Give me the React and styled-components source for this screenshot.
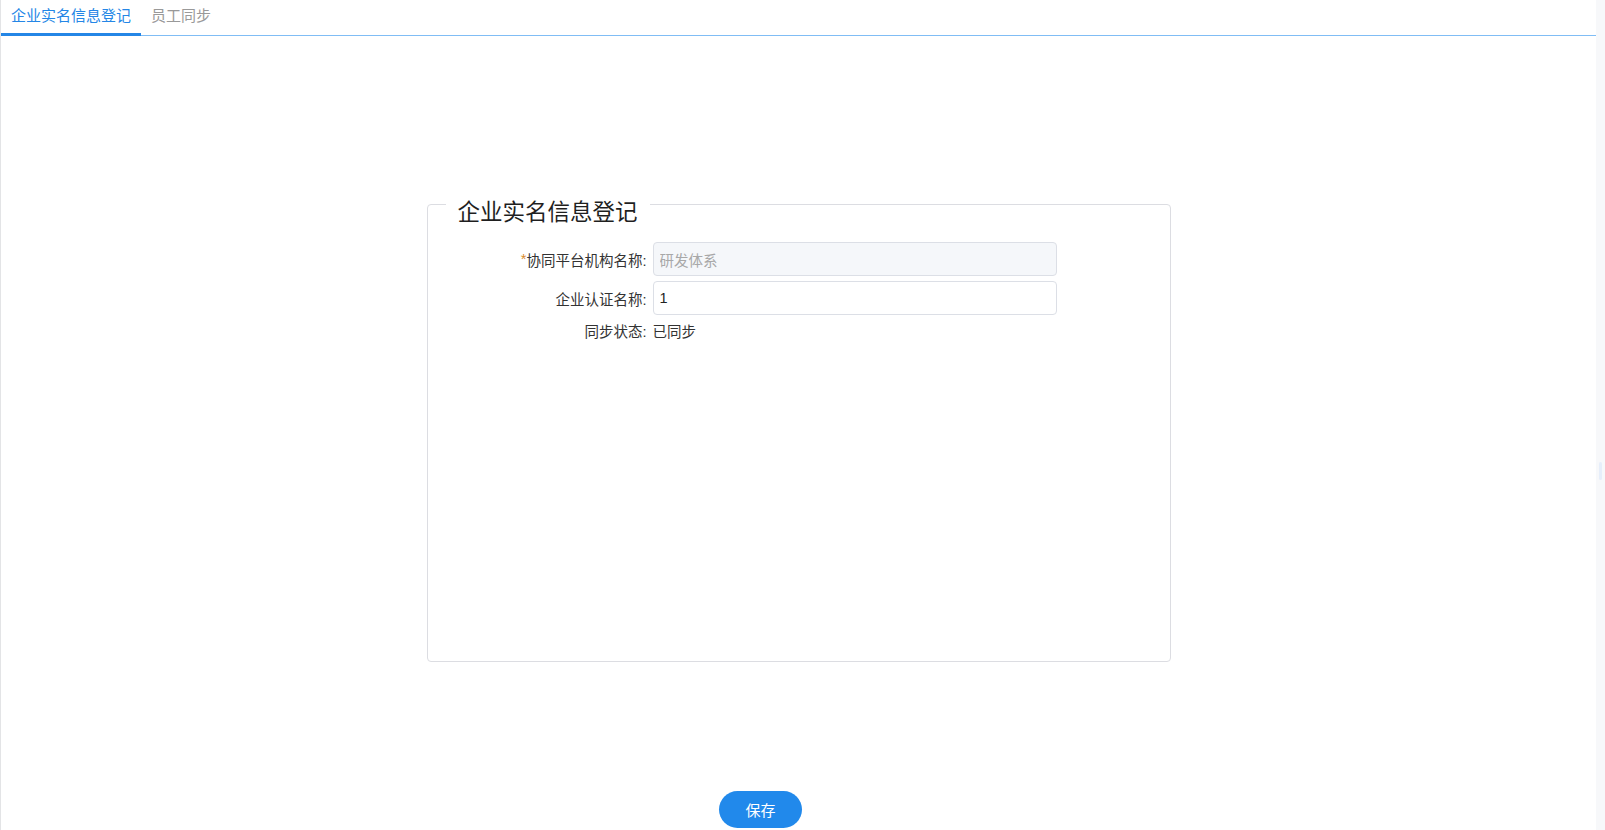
import React from "react";
import styled, { createGlobalStyle } from "styled-components";

const GlobalStyle = createGlobalStyle`
  html, body {
    margin: 0;
    padding: 0;
    background: #ffffff;
  }
  body {
    font-family: "Liberation Sans", "Noto Sans CJK SC", "Noto Sans", sans-serif;
    font-size: 14px;
    color: #333;
  }
  * { box-sizing: border-box; }
`;

const Shell = styled.div`
  display: flex;
  width: 100%;
  height: 830px;
  overflow: hidden;
`;

const Main = styled.div`
  flex: 1;
  display: flex;
  flex-direction: column;
  border-left: 1px solid #e3e4e6;
`;

const Rail = styled.div`
  width: 9px;
  background: #f7f8fa;
  display: flex;
  flex-direction: column;
  align-items: center;
  padding-top: 462px;
`;

const RailThumb = styled.div`
  width: 3px;
  height: 18px;
  border-radius: 2px;
  background: #e6eefa;
`;

const TabBar = styled.div`
  display: flex;
  height: 36px;
  border-bottom: 1px solid #80bdf5;
`;

const Tab = styled.div`
  display: flex;
  align-items: center;
  height: 36px;
  padding: 0 10px 4px;
  font-size: 15px;
  color: ${(p) => (p.$active ? "#2486e6" : "#999")};
  border-bottom: 3px solid ${(p) => (p.$active ? "#2486e6" : "transparent")};
  margin-bottom: -1px;
  cursor: pointer;
`;

const Body = styled.div`
  display: flex;
  flex-direction: column;
  align-items: center;
  padding-top: 144px;
`;

const Panel = styled.fieldset`
  width: 744px;
  margin: 0;
  padding: 14px 0 0;
  border: 1px solid #dcdde2;
  border-radius: 4px;
`;

const Legend = styled.legend`
  margin-left: 18px;
  padding: 18px 12px 0;
  font-size: 22.5px;
  line-height: 30px;
  color: #1f1f1f;
`;

const Form = styled.div`
  display: grid;
  grid-template-columns: 219px 404px;
  grid-auto-rows: min-content;
  column-gap: 6px;
  row-gap: 5px;
  height: 419px;
`;

const Label = styled.label`
  display: flex;
  align-items: center;
  justify-content: flex-end;
  font-size: 14.5px;
  color: #333;
  white-space: nowrap;
`;

const Star = styled.span`
  color: #d98a2b;
`;

const Input = styled.input`
  height: 34px;
  width: 100%;
  padding: 0 6px;
  border: 1px solid #dcdfe6;
  border-radius: 4px;
  font-family: inherit;
  font-size: 14.5px;
  color: ${(p) => (p.disabled ? "#a8a8a8" : "#222")};
  background: ${(p) => (p.disabled ? "#f5f7fa" : "#fff")};
  outline: none;
`;

const Value = styled.div`
  display: flex;
  align-items: center;
  height: 20px;
  font-size: 14.5px;
  color: #333;
`;

const Footer = styled.div`
  display: flex;
  justify-content: center;
  padding-right: 76px;
  margin-top: 129px;
`;

const SaveButton = styled.button`
  width: 83px;
  height: 37px;
  border: none;
  border-radius: 19px;
  background: #2189eb;
  color: #fff;
  font-family: inherit;
  font-size: 15px;
  cursor: pointer;
`;

export default function App() {
  return (
    <>
      <GlobalStyle />
      <Shell>
        <Main>
          <TabBar>
            <Tab $active>企业实名信息登记</Tab>
            <Tab>员工同步</Tab>
          </TabBar>
          <Body>
            <Panel>
              <Legend>企业实名信息登记</Legend>
              <Form>
                <Label>
                  <Star>*</Star>协同平台机构名称:
                </Label>
                <Input disabled defaultValue="研发体系" />
                <Label>企业认证名称:</Label>
                <Input defaultValue="1" />
                <Label>同步状态:</Label>
                <Value>已同步</Value>
              </Form>
            </Panel>
          </Body>
          <Footer>
            <SaveButton>保存</SaveButton>
          </Footer>
        </Main>
        <Rail>
          <RailThumb />
        </Rail>
      </Shell>
    </>
  );
}
